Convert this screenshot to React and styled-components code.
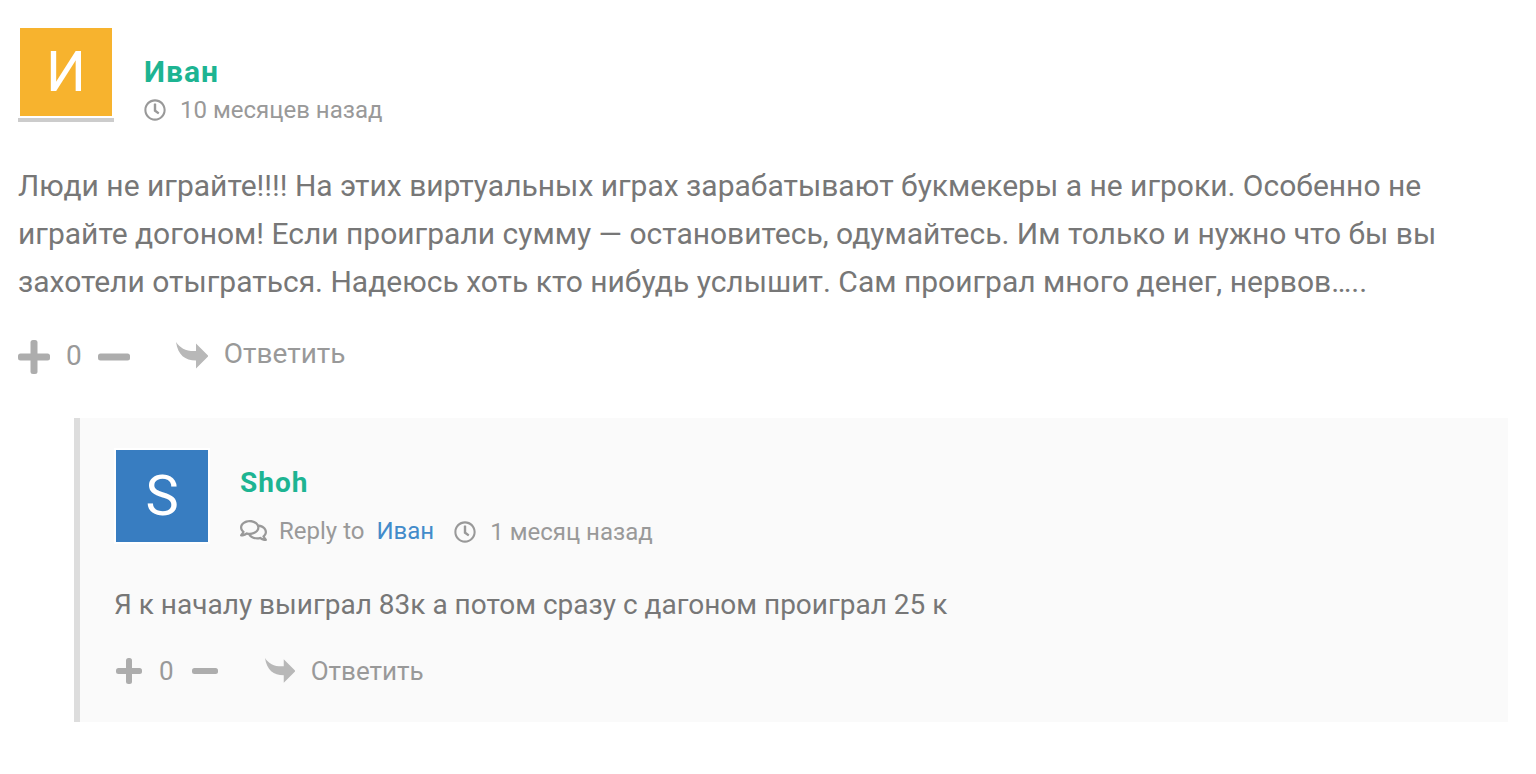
import React from "react";
import styled, { createGlobalStyle } from "styled-components";
import { FaRegClock, FaRegComments } from "react-icons/fa";

const GlobalStyle = createGlobalStyle`
  * { box-sizing: border-box; }
  body {
    margin: 0;
    background: #fff;
    color: #777;
    font-family: Roboto, "Liberation Sans", sans-serif;
  }
`;

const Thread = styled.main`
  padding: 26px 28px 52px 18px;
`;

const Header = styled.header`
  display: flex;
  align-items: flex-end;
  gap: 30px;
`;

const Avatar = styled.div`
  flex: none;
  width: 96px;
  height: 96px;
  padding: 2px;
  background: #fff;
  border-bottom: ${(p) => (p.$underlined ? "4px solid #ccc" : "none")};
`;

const AvatarLetter = styled.span`
  display: flex;
  align-items: center;
  justify-content: center;
  height: 100%;
  background: ${(p) => p.$color};
  color: #fff;
  font-size: 56px;
  line-height: 56px;
`;

const Meta = styled.div`
  display: flex;
  flex-direction: column;
  gap: ${(p) => (p.$nested ? 18 : 10)}px;
`;

const Author = styled.h3`
  margin: 0;
  color: #1db492;
  font-size: ${(p) => (p.$nested ? 28 : 30)}px;
  line-height: 32px;
  font-weight: 700;
  letter-spacing: 1px;
`;

const Details = styled.div`
  display: flex;
  align-items: flex-end;
  gap: 20px;
  color: #999;
  font-size: 24px;
  line-height: 24px;
`;

const Detail = styled.span`
  display: inline-flex;
  align-items: center;
  gap: 14px;

  svg { flex: none; }
`;

const ReplyTo = styled(Detail)`
  gap: 12px;
`;

const ReplyLink = styled.a`
  color: #428bca;
  text-decoration: none;
`;

const Text = styled.p`
  margin: ${(p) => (p.$nested ? "37px 0 26px" : "40px 0 32px")};
  font-size: ${(p) => (p.$nested ? 28 : 30)}px;
  line-height: 48px;
`;

const Actions = styled.div`
  display: flex;
  align-items: center;
  color: #999;
  font-size: ${(p) => (p.$nested ? 26 : 28)}px;
  line-height: 32px;
`;

const Votes = styled.div`
  display: flex;
  align-items: center;
  gap: 16px;
`;

const VoteButton = styled.button`
  display: flex;
  padding: ${(p) => (p.$nested ? "0 1px 0 2px" : "2px 0 0")};
  border: 0;
  background: none;
  color: #adadad;
  cursor: pointer;
`;

const ReplyButton = styled.button`
  display: flex;
  align-items: center;
  gap: 16px;
  margin-left: 46px;
  padding: 0;
  border: 0;
  background: none;
  color: #999;
  font: inherit;
  cursor: pointer;
`;

const ReplyLabel = styled.span`
  padding-bottom: ${(p) => (p.$nested ? 0 : 4)}px;
`;

const Replies = styled.section`
  margin: 44px 0 0 56px;
  padding: 30px 34px 35px;
  border-left: 6px solid #ddd;
  background: #fafafa;
`;

function VoteIcon({ width, height, bar, plus }) {
  return (
    <svg width={width} height={height} fill="currentColor" aria-hidden="true">
      <rect y={(height - bar) / 2} width={width} height={bar} rx="2.500" />
      {plus && <rect x={(width - bar) / 2} width={bar} height={height} rx="2.500" />}
    </svg>
  );
}

function ReplyArrow({ size }) {
  return (
    <svg width={size} height={size} viewBox="0 0 32 32" fill="#b8b8b8" aria-hidden="true">
      <path d="M0 2C4 8 10 11.500 20 11V3.500L32.500 16L20 28.500V20.500C9 20.500 2 15 0 2Z" />
    </svg>
  );
}

function Comment({ author, letter, color, underlined, nested, replyTo, time, children }) {
  const vote = nested
    ? { width: 26, height: 26, bar: 6 }
    : { width: 32, height: 34, bar: 7 };
  return (
    <article>
      <Header>
        <Avatar $underlined={underlined}>
          <AvatarLetter $color={color}>{letter}</AvatarLetter>
        </Avatar>
        <Meta $nested={nested}>
          <Author $nested={nested}>{author}</Author>
          <Details>
            {replyTo && (
              <ReplyTo>
                <FaRegComments size={27} />
                <span>Reply to</span>
                <ReplyLink href="#ivan">{replyTo}</ReplyLink>
              </ReplyTo>
            )}
            <Detail>
              <FaRegClock size={22} />
              <time>{time}</time>
            </Detail>
          </Details>
        </Meta>
      </Header>
      <Text $nested={nested}>{children}</Text>
      <Actions $nested={nested}>
        <Votes>
          <VoteButton type="button" aria-label="+1" $nested={nested}>
            <VoteIcon {...vote} plus />
          </VoteButton>
          <span>0</span>
          <VoteButton type="button" aria-label="-1" $nested={nested}>
            <VoteIcon {...vote} />
          </VoteButton>
        </Votes>
        <ReplyButton type="button">
          <ReplyArrow size={nested ? 30 : 32} />
          <ReplyLabel $nested={nested}>Ответить</ReplyLabel>
        </ReplyButton>
      </Actions>
    </article>
  );
}

export default function App() {
  return (
    <>
      <GlobalStyle />
      <Thread id="ivan">
        <Comment author="Иван" letter="И" color="#f7b32e" underlined time="10 месяцев назад">
          Люди не играйте!!!! На этих виртуальных играх зарабатывают букмекеры а не игроки.
          Особенно не играйте догоном! Если проиграли сумму — остановитесь, одумайтесь. Им
          только и нужно что бы вы захотели отыграться. Надеюсь хоть кто нибудь услышит. Сам
          проиграл много денег, нервов…..
        </Comment>
        <Replies>
          <Comment author="Shoh" letter="S" color="#387dc1" nested replyTo="Иван" time="1 месяц назад">
            Я к началу выиграл 83к а потом сразу с дагоном проиграл 25 к
          </Comment>
        </Replies>
      </Thread>
    </>
  );
}
